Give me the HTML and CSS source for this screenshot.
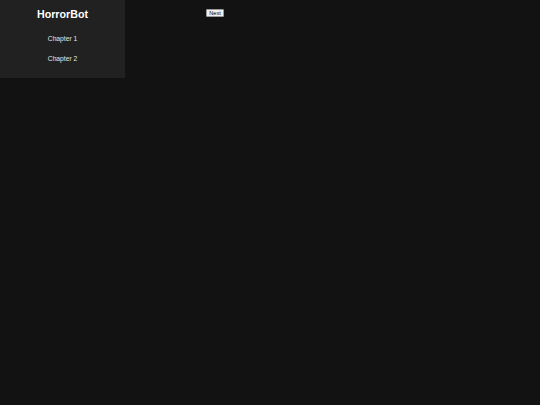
FILE: index.html
```html
<!DOCTYPE html>
<html>
<head>
<meta charset="utf-8">
<link rel="stylesheet" href="styles.css">
</head>
<body>
<div class="app">
  <nav class="sidebar">
    <h1 class="title">HorrorBot</h1>
    <ul class="chapters">
      <li class="chapter">Chapter 1</li>
      <li class="chapter">Chapter 2</li>
    </ul>
  </nav>
  <main class="content">
    <button class="next">Next</button>
  </main>
</div>
</body>
</html>
```
FILE: styles.css
```css
html, body {
  margin: 0;
  padding: 0;
  background: #121212;
  height: 100%;
}
body {
  font-family: "Liberation Sans", Arial, sans-serif;
  color: #fff;
}
.app {
  display: flex;
  align-items: flex-start;
}
.sidebar {
  width: 125px;
  background: #212121;
  padding: 8px 0 15px;
  text-align: center;
  box-sizing: border-box;
}
.title {
  margin: 0;
  font-size: 10.7px;
  line-height: 13px;
  font-weight: bold;
  color: #fff;
}
.chapters {
  list-style: none;
  margin: 14px 0 0;
  padding: 0;
  display: flex;
  flex-direction: column;
  gap: 12.4px;
}
.chapter {
  font-size: 6.7px;
  line-height: 8px;
  color: #e6e6e6;
}
.content {
  flex: 1;
  padding: 8.5px 0 0 81px;
}
.next {
  font-family: "Liberation Sans", Arial, sans-serif;
  font-size: 5.6px;
  line-height: 6px;
  height: 8px;
  width: 18px;
  padding: 0;
  background: #f0f0f0;
  color: #000;
  border: 1px solid #9a9a9a;
  border-radius: 1px;
  box-sizing: border-box;
  display: block;
}
```
